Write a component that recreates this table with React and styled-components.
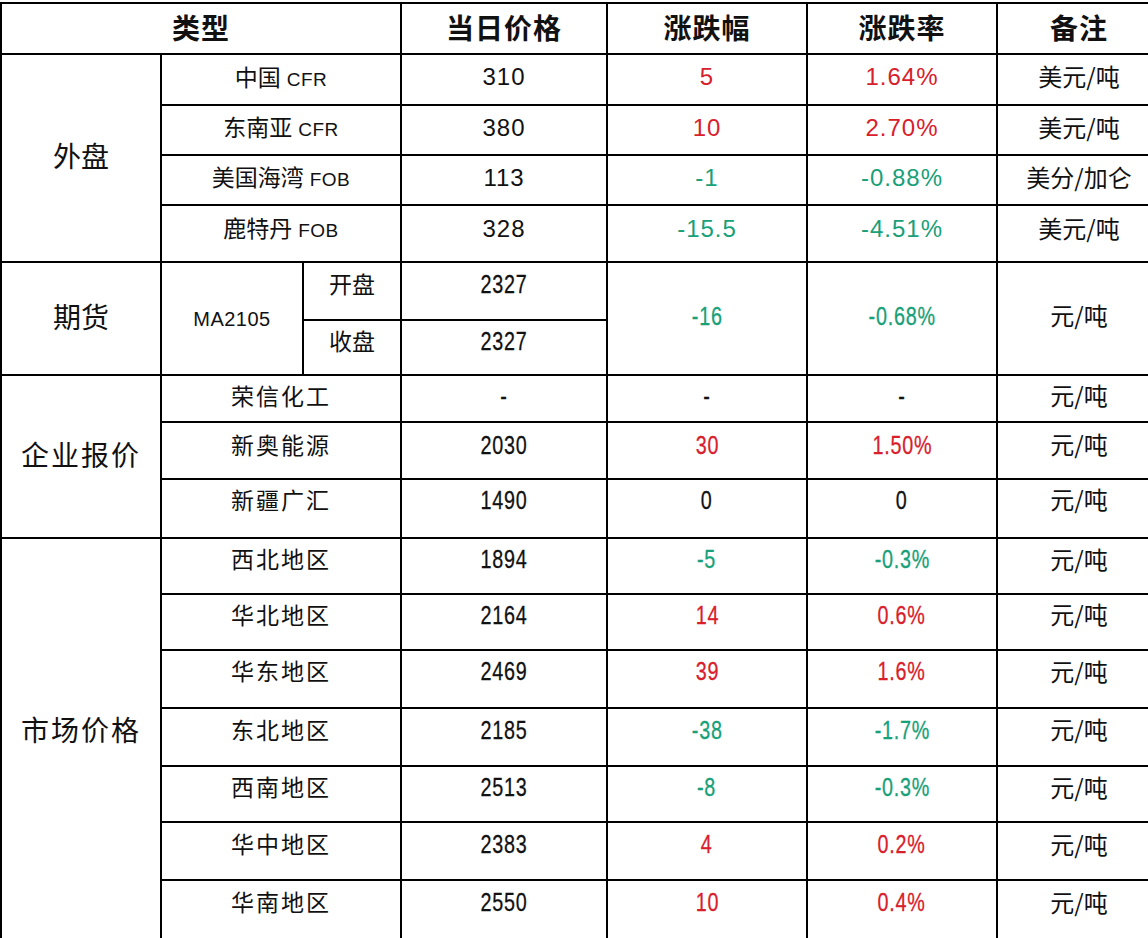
import React from "react";
import styled, { createGlobalStyle } from "styled-components";

const GlobalStyle = createGlobalStyle`
  html, body {
    margin: 0;
    padding: 0;
    background: #fff;
    overflow: hidden;
  }
  body {
    font-family: "Liberation Sans", "Noto Sans CJK SC", sans-serif;
    color: #111;
  }
`;

const Page = styled.div`
  width: 1148px;
  height: 938px;
  overflow: hidden;
  padding-top: 2px;
  box-sizing: border-box;
`;

const Sheet = styled.table`
  border-collapse: collapse;
  table-layout: fixed;
  width: 1160px;
`;

const Row = styled.tr`
  height: ${(p) => p.$h}px;
`;

const HeadCell = styled.th`
  border: 2px solid #000;
  font-family: "Noto Sans CJK SC", sans-serif;
  font-size: 28px;
  font-weight: 700;
  text-align: center;
  vertical-align: middle;
  padding: 0 0 4px;
  letter-spacing: 1px;
`;

const Cell = styled.td`
  border: 2px solid #000;
  text-align: center;
  vertical-align: middle;
  padding: 0 0 ${(p) => p.$lift ?? 4}px;
  font-size: 24px;
  line-height: 1.2;
  white-space: nowrap;
  overflow: hidden;
  color: ${(p) => (p.$tone === "up" ? "#d8202c" : p.$tone === "down" ? "#18a078" : "#111")};
`;

const Category = styled(Cell)`
  font-family: "Noto Sans CJK SC", sans-serif;
  font-size: 28px;
  letter-spacing: ${(p) => p.$spacing ?? 0}px;
`;

const Label = styled.span`
  font-family: "Noto Sans CJK SC", sans-serif;
  font-size: 23px;
  letter-spacing: ${(p) => p.$spacing ?? 0}px;
`;

const Latin = styled.span`
  font-family: "Liberation Sans", sans-serif;
  font-size: ${(p) => p.$size ?? 19}px;
  letter-spacing: 0.5px;
  margin-left: ${(p) => (p.$solo ? 0 : 6)}px;
`;

const Num = styled.span`
  display: inline-block;
  font-family: "Liberation Sans", sans-serif;
  font-size: ${(p) => (p.$narrow ? 26 : 24)}px;
  letter-spacing: ${(p) => (p.$narrow ? 1 : 1)}px;
  transform: ${(p) => (p.$narrow ? "scaleX(0.76)" : "none")};
  -webkit-text-stroke: ${(p) => (p.$narrow ? "0.3px" : "0")};
`;

const Unit = styled.span`
  font-family: "Noto Sans CJK SC", sans-serif;
  font-size: 24px;
`;

const tone = (v) => (v.startsWith("-") && v.length > 1 ? "down" : v === "0" || v === "-" ? undefined : "up");

const foreign = [
  { name: "中国", tag: "CFR", price: "310", diff: "5", rate: "1.64%", unit: "美元/吨", h: 51, lift: 4 },
  { name: "东南亚", tag: "CFR", price: "380", diff: "10", rate: "2.70%", unit: "美元/吨", h: 50, lift: 4 },
  { name: "美国海湾", tag: "FOB", price: "113", diff: "-1", rate: "-0.88%", unit: "美分/加仑", h: 50, lift: 4 },
  { name: "鹿特丹", tag: "FOB", price: "328", diff: "-15.5", rate: "-4.51%", unit: "美元/吨", h: 57, lift: 9 },
];

const companies = [
  { name: "荣信化工", price: "-", diff: "-", rate: "-", h: 47, lift: 4 },
  { name: "新奥能源", price: "2030", diff: "30", rate: "1.50%", h: 57, lift: 10 },
  { name: "新疆广汇", price: "1490", diff: "0", rate: "0", h: 59, lift: 16 },
];

const markets = [
  { name: "西北地区", price: "1894", diff: "-5", rate: "-0.3%", h: 56, lift: 12 },
  { name: "华北地区", price: "2164", diff: "14", rate: "0.6%", h: 56, lift: 13 },
  { name: "华东地区", price: "2469", diff: "39", rate: "1.6%", h: 58, lift: 14 },
  { name: "东北地区", price: "2185", diff: "-38", rate: "-1.7%", h: 58, lift: 13 },
  { name: "西南地区", price: "2513", diff: "-8", rate: "-0.3%", h: 56, lift: 12 },
  { name: "华中地区", price: "2383", diff: "4", rate: "0.2%", h: 58, lift: 12 },
  { name: "华南地区", price: "2550", diff: "10", rate: "0.4%", h: 60, lift: 14 },
];

function GroupRows({ title, rows, spacing, titleLift }) {
  return rows.map((r, i) => (
    <Row key={r.name} $h={r.h}>
      {i === 0 && (
        <Category rowSpan={rows.length} $spacing={spacing} $lift={titleLift}>
          {title}
        </Category>
      )}
      <Cell colSpan={2} $lift={r.lift}>
        <Label $spacing={2}>{r.name}</Label>
      </Cell>
      <Cell $lift={r.lift}>
        <Num $narrow>{r.price}</Num>
      </Cell>
      <Cell $lift={r.lift} $tone={tone(r.diff)}>
        <Num $narrow>{r.diff}</Num>
      </Cell>
      <Cell $lift={r.lift} $tone={tone(r.rate)}>
        <Num $narrow>{r.rate}</Num>
      </Cell>
      <Cell $lift={r.lift}>
        <Unit>元/吨</Unit>
      </Cell>
    </Row>
  ));
}

export default function App() {
  return (
    <Page>
      <GlobalStyle />
      <Sheet>
        <colgroup>
          <col style={{ width: 160 }} />
          <col style={{ width: 142 }} />
          <col style={{ width: 98 }} />
          <col style={{ width: 206 }} />
          <col style={{ width: 200 }} />
          <col style={{ width: 190 }} />
          <col style={{ width: 164 }} />
        </colgroup>
        <thead>
          <Row $h={51}>
            <HeadCell colSpan={3}>类型</HeadCell>
            <HeadCell>当日价格</HeadCell>
            <HeadCell>涨跌幅</HeadCell>
            <HeadCell>涨跌率</HeadCell>
            <HeadCell>备注</HeadCell>
          </Row>
        </thead>
        <tbody>
          {foreign.map((r, i) => (
            <Row key={r.name} $h={r.h}>
              {i === 0 && <Category rowSpan={foreign.length}>外盘</Category>}
              <Cell colSpan={2} $lift={r.lift}>
                <Label>{r.name}</Label>
                <Latin>{r.tag}</Latin>
              </Cell>
              <Cell $lift={r.lift}>
                <Num>{r.price}</Num>
              </Cell>
              <Cell $lift={r.lift} $tone={tone(r.diff)}>
                <Num>{r.diff}</Num>
              </Cell>
              <Cell $lift={r.lift} $tone={tone(r.rate)}>
                <Num>{r.rate}</Num>
              </Cell>
              <Cell $lift={r.lift}>
                <Unit>{r.unit}</Unit>
              </Cell>
            </Row>
          ))}

          <Row $h={58}>
            <Category rowSpan={2}>期货</Category>
            <Cell rowSpan={2} $lift={0}>
              <Latin $solo $size={20}>MA2105</Latin>
            </Cell>
            <Cell $lift={12}>
              <Label>开盘</Label>
            </Cell>
            <Cell $lift={12}>
              <Num $narrow>2327</Num>
            </Cell>
            <Cell rowSpan={2} $tone="down">
              <Num $narrow>-16</Num>
            </Cell>
            <Cell rowSpan={2} $tone="down">
              <Num $narrow>-0.68%</Num>
            </Cell>
            <Cell rowSpan={2}>
              <Unit>元/吨</Unit>
            </Cell>
          </Row>
          <Row $h={55}>
            <Cell $lift={12}>
              <Label>收盘</Label>
            </Cell>
            <Cell $lift={12}>
              <Num $narrow>2327</Num>
            </Cell>
          </Row>

          <GroupRows title="企业报价" rows={companies} spacing={2} />
          <GroupRows title="市场价格" rows={markets} spacing={2} titleLift={18} />
        </tbody>
      </Sheet>
    </Page>
  );
}
